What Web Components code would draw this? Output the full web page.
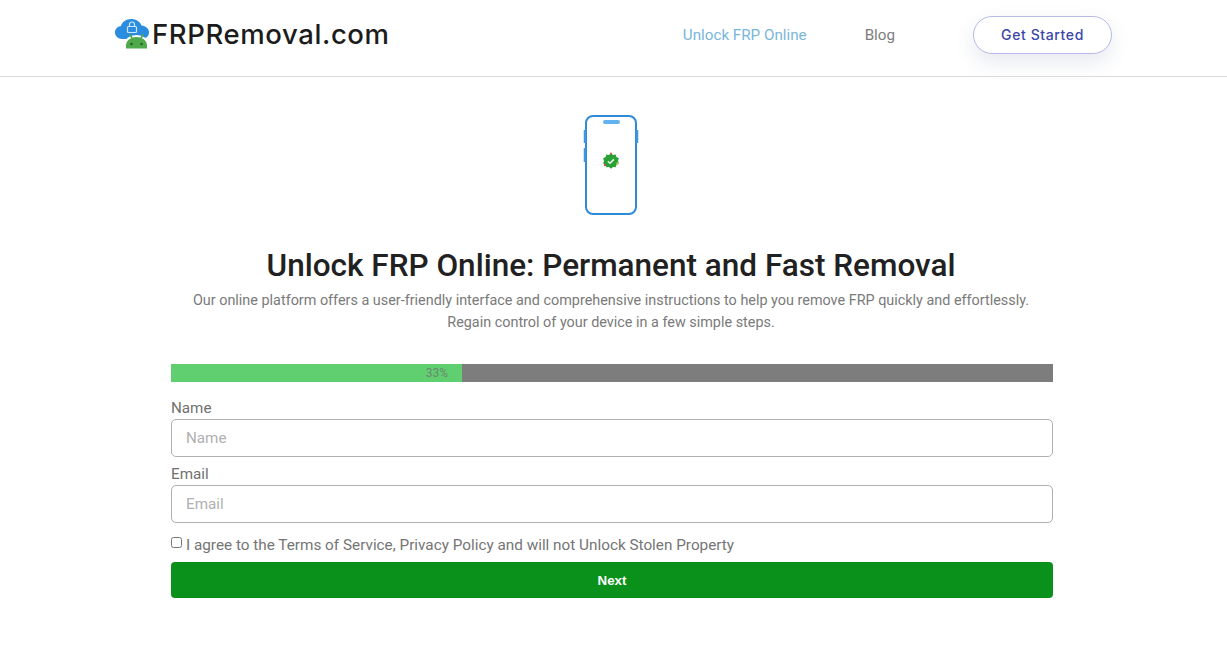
<!DOCTYPE html>
<html lang="en">
<head>
<meta charset="utf-8">
<title>FRPRemoval.com</title>
<style>
  html, body { margin: 0; background: #fff; font-family: Roboto, "Liberation Sans", sans-serif; }
  body { padding-right: 3px; }
</style>
</head>
<body>
<site-header></site-header>
<hero-intro></hero-intro>
<unlock-form></unlock-form>

<script>
class siteHeader extends HTMLElement {
    constructor() {
        super();
        this.attachShadow({ mode: "open" });
    }

    connectedCallback() {
        this.shadowRoot.innerHTML = `
            <style>
                :host {
                    display: flex;
                    align-items: center;
                    height: 70px;
                    margin-right: -3px;
                    padding: 0 115px 6px;
                    border-bottom: 1px solid #dcdcdc;
                }
                .logo {
                    display: flex;
                    align-items: center;
                    text-decoration: none;
                    color: #1c1c1c;
                    font: 500 27.5px/1 Inter, "Open Sans", sans-serif;
                    letter-spacing: 0.6px;
                }
                .logo svg { display: block; width: 37px; height: 34px; }
                nav {
                    margin-left: auto;
                    display: flex;
                    align-items: center;
                    font: 400 15.2px/1 Roboto, sans-serif;
                }
                nav a { text-decoration: none; color: #7d7d7d; margin-top: 1px; }
                nav a.active { color: #79b6da; margin-right: 58px; }
                .cta {
                    margin-left: 78px;
                    margin-top: 0;
                    box-sizing: border-box;
                    width: 139px;
                    height: 38px;
                    display: flex;
                    align-items: center;
                    justify-content: center;
                    border: 1px solid #b6bbe6;
                    border-radius: 19px;
                    background: #fff;
                    color: #3c46a8;
                    font: 500 14px/1 Inter, Lato, sans-serif;
                    letter-spacing: 0.6px;
                    box-shadow: 0 8px 20px rgba(60, 70, 120, 0.12);
                }
            </style>
            <a class="logo" href="#">
                <svg viewBox="0 0 37 34" aria-hidden="true">
                    <path fill="#2a8de0" d="M7 21C3 21 0 18 0 14.500 0 11 2.500 8.500 6 8 7 4 11 1 16 1c5 0 9 2.500 10.500 6.500C31 8 34 10.500 34 14.500 34 18 31 21 27 21z"/>
                    <rect x="12.500" y="8.500" width="9" height="6" rx="1" fill="none" stroke="#cfe6fa" stroke-width="1.200"/>
                    <path fill="none" stroke="#cfe6fa" stroke-width="1.200" d="M14.500 8.500V6.500a2.500 2.500 0 0 1 5 0v2"/>
                    <path fill="#4fa84a" stroke="#fff" stroke-width="2" d="M10 31.500V27c0-5 5-9 11.500-9S33 22 33 27v4.500z"/>
                    <path stroke="#4fa84a" stroke-width="1.500" d="M14.500 16l2.500 4M28.500 16l-2.500 4"/>
                    <circle cx="16.500" cy="26" r="1.300" fill="#2c5f2c"/>
                    <circle cx="26.500" cy="26" r="1.300" fill="#2c5f2c"/>
                </svg>
                <span>FRPRemoval.com</span>
            </a>
            <nav>
                <a class="active" href="#">Unlock FRP Online</a>
                <a href="#">Blog</a>
                <a class="cta" href="#">Get Started</a>
            </nav>
        `;
    }
}

class heroIntro extends HTMLElement {
    constructor() {
        super();
        this.attachShadow({ mode: "open" });
    }

    connectedCallback() {
        this.shadowRoot.innerHTML = `
            <style>
                :host {
                    display: flex;
                    flex-direction: column;
                    align-items: center;
                    text-align: center;
                    padding: 37px 2px 0 0;
                }
                svg { display: block; width: 60px; height: 102px; }
                h1 {
                    margin: 30px 0 0;
                    font: 500 31.5px/40px Roboto, sans-serif;
                    color: #212121;
                }
                p {
                    margin: 4px 0 0;
                    font: 400 14.4px/22px Roboto, sans-serif;
                    color: #7a7a7a;
                }
            </style>
            <svg viewBox="0 0 60 102" aria-hidden="true">
                <rect x="5" y="2" width="50" height="98" rx="7" fill="#fff" stroke="#2f8bd8" stroke-width="2"/>
                <path stroke="#3f95df" stroke-width="2.500" d="M4 16v13M4 34v14M56 16v13"/>
                <rect x="22" y="6" width="17" height="4" rx="2" fill="#62b2ef"/>
                <path fill="#2aa136" d="M30 39l2 1.900 2.700-.4.700 2.600 2.500 1.200-.9 2.600.9 2.600-2.500 1.200-.7 2.600-2.700-.4-2 1.900-2-1.900-2.700.4-.7-2.600-2.500-1.200.9-2.600-.9-2.600 2.500-1.200.7-2.600 2.700.4z"/>
                <circle cx="30" cy="39.500" r="1" fill="#c9584a"/>
                <circle cx="24" cy="51" r="1.200" fill="#c9584a"/>
                <circle cx="36.500" cy="49.500" r="1.200" fill="#b9cc52"/>
                <path fill="none" stroke="#eaf8e6" stroke-width="1.500" d="M26.800 47.200l2.200 2 3.800-3.800"/>
            </svg>
            <h1>Unlock FRP Online: Permanent and Fast Removal</h1>
            <p>Our online platform offers a user-friendly interface and comprehensive instructions to help you remove FRP quickly and effortlessly.<br>Regain control of your device in a few simple steps.</p>
        `;
    }
}

class progressBar extends HTMLElement {
    constructor() {
        super();
        this.attachShadow({ mode: "open" });
    }

    connectedCallback() {
        const value = this.getAttribute("value") || "0";
        this.shadowRoot.innerHTML = `
            <style>
                :host { display: block; height: 18px; background: #7d7d7d; }
                div {
                    box-sizing: border-box;
                    height: 100%;
                    width: ${value}%;
                    padding-right: 14px;
                    background: #5fcf70;
                    color: #6b8a6f;
                    text-align: right;
                    font: 400 12px/18px Roboto, sans-serif;
                }
            </style>
            <div>${value}%</div>
        `;
    }
}

class textField extends HTMLElement {
    constructor() {
        super();
        this.attachShadow({ mode: "open" });
    }

    connectedCallback() {
        const label = this.getAttribute("label") || "";
        const type = this.getAttribute("type") || "text";
        this.shadowRoot.innerHTML = `
            <style>
                :host { display: block; }
                label {
                    display: block;
                    font: 400 15.2px/21px Roboto, sans-serif;
                    color: #707070;
                }
                input {
                    display: block;
                    box-sizing: border-box;
                    width: 100%;
                    height: 38px;
                    padding: 0 14px;
                    border: 1px solid #b0b0b0;
                    border-radius: 5px;
                    background: #fff;
                    font: 400 15.2px Roboto, sans-serif;
                }
                input::placeholder { color: #b0b0b0; opacity: 1; }
            </style>
            <label>${label}</label>
            <input type="${type}" placeholder="${label}">
        `;
    }
}

class unlockForm extends HTMLElement {
    constructor() {
        super();
        this.attachShadow({ mode: "open" });
    }

    connectedCallback() {
        this.shadowRoot.innerHTML = `
            <style>
                :host {
                    display: block;
                    width: 882px;
                    margin: 30px auto 0;
                }
                text-field { margin-top: 7px; }
                progress-bar { margin-bottom: 16px; }
                .agree {
                    display: flex;
                    align-items: flex-start;
                    margin-top: 12px;
                    font: 400 15.3px/20px Roboto, sans-serif;
                    color: #757575;
                }
                .agree input {
                    width: 11px;
                    height: 11px;
                    margin: 1.500px 4px 0 0;
                }
                button {
                    display: block;
                    width: 100%;
                    height: 36px;
                    margin-top: 7px;
                    border: 0;
                    border-radius: 4px;
                    background: #0a911b;
                    color: #fff;
                    font: 700 13.3px "Liberation Sans", Arial, sans-serif;
                }
            </style>
            <progress-bar value="33"></progress-bar>
            <text-field label="Name"></text-field>
            <text-field label="Email" type="email"></text-field>
            <label class="agree">
                <input type="checkbox">
                <span>I agree to the Terms of Service, Privacy Policy and will not Unlock Stolen Property</span>
            </label>
            <button type="button">Next</button>
        `;
    }
}

customElements.define("site-header", siteHeader);
customElements.define("hero-intro", heroIntro);
customElements.define("progress-bar", progressBar);
customElements.define("text-field", textField);
customElements.define("unlock-form", unlockForm);
</script>
</body>
</html>
